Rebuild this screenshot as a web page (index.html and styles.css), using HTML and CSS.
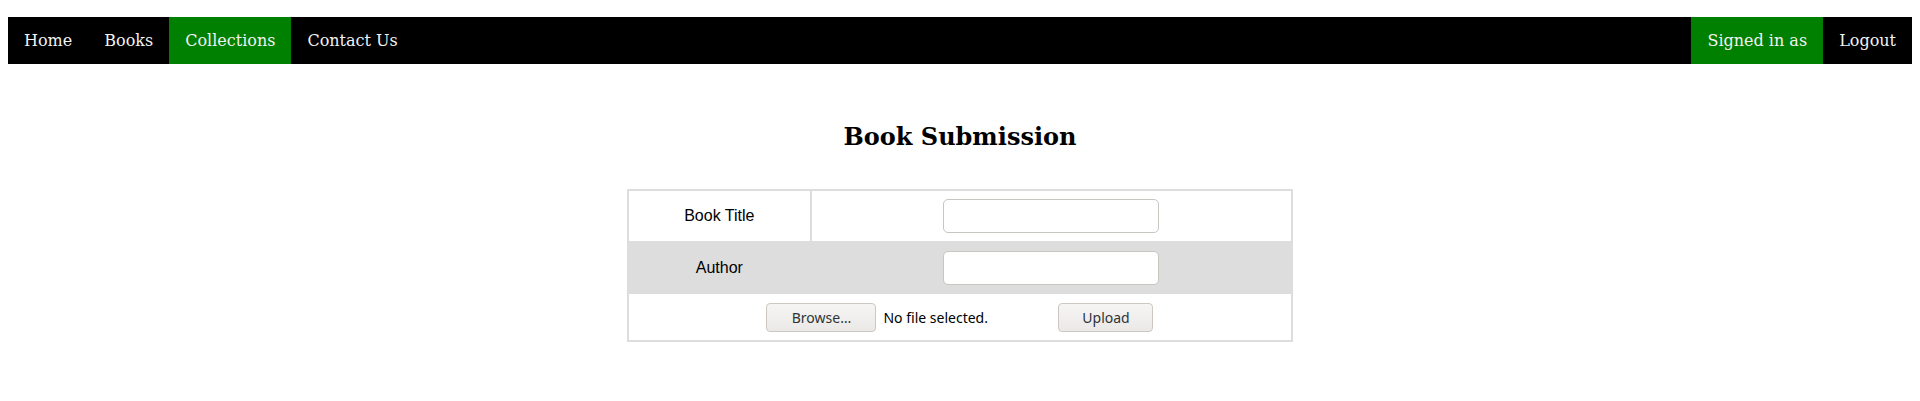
FILE: index.html
```html
<!DOCTYPE html>
<html>
<head>
<meta charset="utf-8">
<title>Book Submission</title>
<link rel="stylesheet" href="styles.css">
</head>
<body>
<nav class="topnav">
  <a href="#">Home</a>
  <a href="#">Books</a>
  <a href="#" class="active">Collections</a>
  <a href="#">Contact Us</a>
  <a href="#" class="active push">Signed in as</a>
  <a href="#">Logout</a>
</nav>
<h2 class="title">Book Submission</h2>
<table class="form-table">
  <tr class="row-a">
    <td class="label">Book Title</td>
    <td class="field"><input type="text" class="text-in"></td>
  </tr>
  <tr class="row-b">
    <td class="label">Author</td>
    <td class="field"><input type="text" class="text-in"></td>
  </tr>
  <tr class="row-c">
    <td colspan="2">
      <div class="upload-line">
        <button type="button" class="btn browse">Browse…</button>
        <span class="file-label">No file selected.</span>
        <button type="submit" class="btn upload">Upload</button>
      </div>
    </td>
  </tr>
</table>
</body>
</html>
```
FILE: styles.css
```css
body {
  margin: 8px;
  font-family: "DejaVu Serif", serif;
  background: #fff;
}
.topnav {
  display: flex;
  background: #000;
  height: 47px;
  margin-top: 9px;
}
.topnav a {
  color: #f2f2f2;
  text-decoration: none;
  font-size: 16px;
  line-height: 19px;
  padding: 14px 16px;
}
.topnav a.active {
  background: #008000;
}
.topnav a.push {
  margin-left: auto;
}
.title {
  text-align: center;
  font-size: 24px;
  margin: 59px 0 38px;
  line-height: 28px;
}
.form-table {
  margin: 0 auto;
  width: 35%;
  border-collapse: separate;
  border-spacing: 0;
  border: 2px solid #ddd;
  font-family: "Liberation Sans", Arial, sans-serif;
  font-size: 16px;
}
.form-table td {
  padding: 0;
  text-align: center;
  vertical-align: middle;
}
.form-table td.label {
  width: 181px;
  border-right: 2px solid #ddd;
}
.row-a td { height: 50px; }
.row-b td { height: 53px; background: #ddd; }
.row-c td { height: 46px; }
.text-in {
  box-sizing: border-box;
  width: 216px;
  height: 34px;
  border: 1px solid #c9c5c1;
  border-radius: 5px;
  background: #fff;
  display: block;
  margin: 0 auto;
}
.upload-line {
  display: flex;
  justify-content: center;
  align-items: center;
}
.btn {
  box-sizing: border-box;
  height: 29px;
  border: 1px solid #cdc7c2;
  border-radius: 4px;
  background: linear-gradient(#f6f5f4, #ebe9e7);
  font-family: "Noto Sans", "DejaVu Sans", sans-serif;
  font-size: 14px;
  color: #2e3436;
  padding: 0;
  margin: 0;
}
.browse { width: 110px; }
.upload { width: 95px; }
.file-label {
  width: 175px;
  margin-left: 7px;
  text-align: left;
  font-family: "Noto Sans", "DejaVu Sans", sans-serif;
  font-size: 14px;
  color: #000;
}
```
